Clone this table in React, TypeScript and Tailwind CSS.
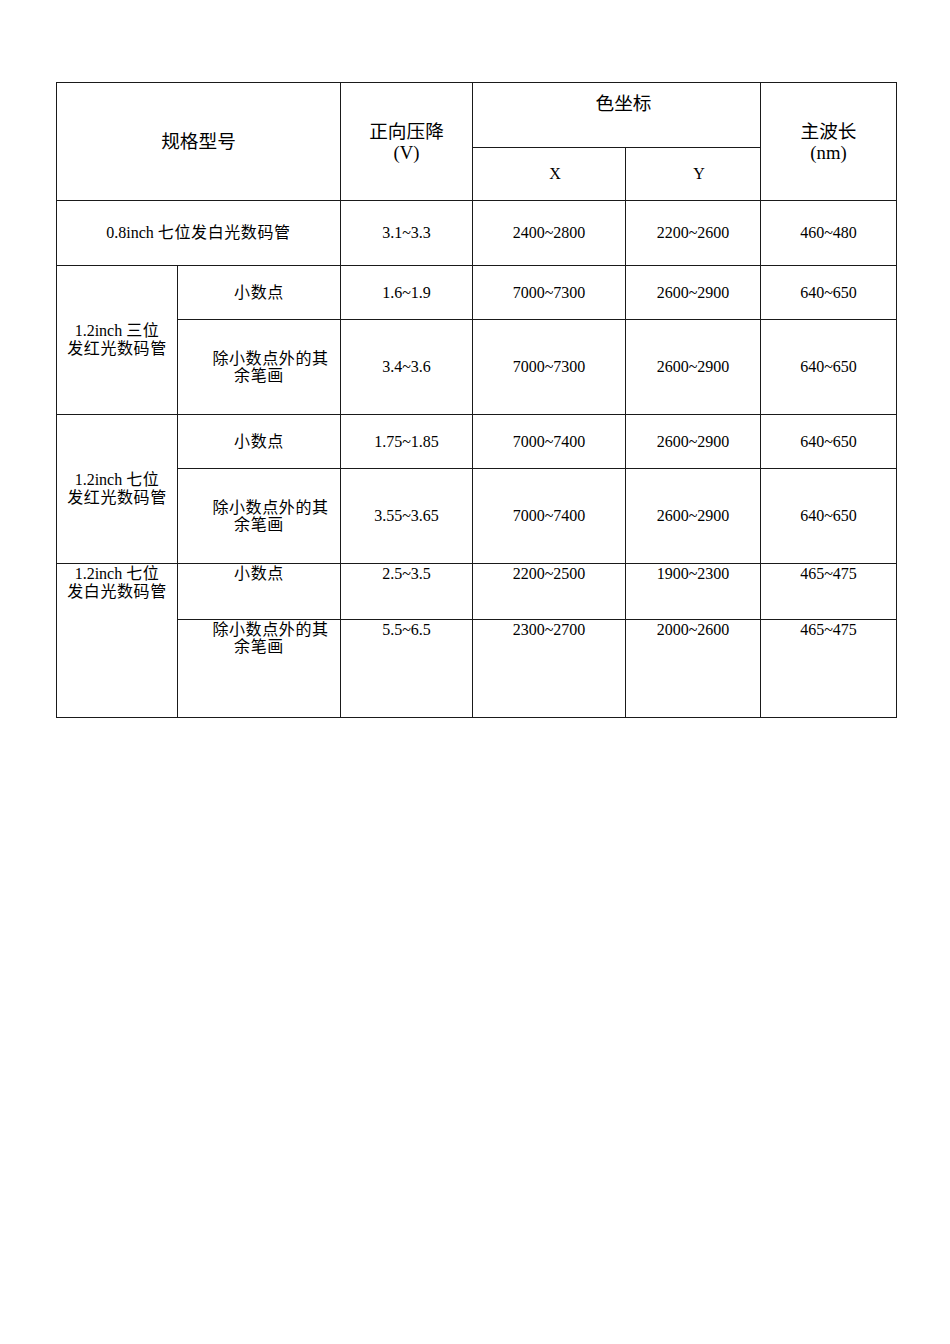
import React from "react";

const C = ({ children }: { children: React.ReactNode }) => (
  <span className="tracking-[0.6px]">{children}</span>
);

const Cell = ({
  className = "",
  children,
}: {
  className?: string;
  children?: React.ReactNode;
}) => (
  <div className={`bg-white flex flex-col items-center text-center ${className}`}>
    {children}
  </div>
);

const Mid = () => (
  <div className="w-full leading-[17px]">
    <div className="pl-[23px]">
      <C>除小数点外的其</C>
    </div>
    <div>
      <C>余笔画</C>
    </div>
  </div>
);

export default function App() {
  const c = "justify-center leading-[18px]";
  const t = "justify-start pt-[1px] leading-[18px]";
  return (
    <div className="min-h-[1344px] w-[950px] bg-white text-black font-['Liberation_Serif','Noto_Sans_CJK_SC',serif] text-[16px]">
      <div className="pt-[82px] pl-[56px]">
        <div className="grid w-[841px] grid-cols-[120px_162px_131px_152px_134px_135px] grid-rows-[64px_52px_64px_53px_94px_53px_94px_55px_97px] gap-px bg-[#1a1a1a] p-px">
          {/* header */}
          <Cell className="col-start-1 col-span-2 row-start-1 row-span-2 justify-center text-[18.67px] leading-[21px]">
            规格型号
          </Cell>
          <Cell className="col-start-3 row-start-1 row-span-2 justify-center text-[18.67px] leading-[21px]">
            <div>正向压降</div>
            <div>(V)</div>
          </Cell>
          <Cell className="col-start-4 col-span-2 row-start-1 justify-start pt-[10px] pl-[14px] text-[18.67px] leading-[21px]">
            色坐标
          </Cell>
          <Cell className="col-start-6 row-start-1 row-span-2 justify-center text-[18.67px] leading-[21px]">
            <div>主波长</div>
            <div>(nm)</div>
          </Cell>
          <Cell className="col-start-4 row-start-2 justify-center pl-[12px] text-[16px]">X</Cell>
          <Cell className="col-start-5 row-start-2 justify-center pl-[12px] text-[16px]">Y</Cell>

          {/* row 3 */}
          <Cell className={`col-start-1 col-span-2 row-start-3 ${c}`}>
            <div>
              0.8inch <C>七位发白光数码管</C>
            </div>
          </Cell>
          <Cell className={`col-start-3 row-start-3 ${c}`}>3.1~3.3</Cell>
          <Cell className={`col-start-4 row-start-3 ${c}`}>2400~2800</Cell>
          <Cell className={`col-start-5 row-start-3 ${c}`}>2200~2600</Cell>
          <Cell className={`col-start-6 row-start-3 ${c}`}>460~480</Cell>

          {/* group 2 */}
          <Cell className={`col-start-1 row-start-4 row-span-2 ${c}`}>
            <div>
              1.2inch <C>三位</C>
            </div>
            <div>
              <C>发红光数码管</C>
            </div>
          </Cell>
          <Cell className={`col-start-2 row-start-4 ${c}`}>
            <C>小数点</C>
          </Cell>
          <Cell className={`col-start-3 row-start-4 ${c}`}>1.6~1.9</Cell>
          <Cell className={`col-start-4 row-start-4 ${c}`}>7000~7300</Cell>
          <Cell className={`col-start-5 row-start-4 ${c}`}>2600~2900</Cell>
          <Cell className={`col-start-6 row-start-4 ${c}`}>640~650</Cell>
          <Cell className={`col-start-2 row-start-5 ${c}`}>
            <Mid />
          </Cell>
          <Cell className={`col-start-3 row-start-5 ${c}`}>3.4~3.6</Cell>
          <Cell className={`col-start-4 row-start-5 ${c}`}>7000~7300</Cell>
          <Cell className={`col-start-5 row-start-5 ${c}`}>2600~2900</Cell>
          <Cell className={`col-start-6 row-start-5 ${c}`}>640~650</Cell>

          {/* group 3 */}
          <Cell className={`col-start-1 row-start-6 row-span-2 ${c}`}>
            <div>
              1.2inch <C>七位</C>
            </div>
            <div>
              <C>发红光数码管</C>
            </div>
          </Cell>
          <Cell className={`col-start-2 row-start-6 ${c}`}>
            <C>小数点</C>
          </Cell>
          <Cell className={`col-start-3 row-start-6 ${c}`}>1.75~1.85</Cell>
          <Cell className={`col-start-4 row-start-6 ${c}`}>7000~7400</Cell>
          <Cell className={`col-start-5 row-start-6 ${c}`}>2600~2900</Cell>
          <Cell className={`col-start-6 row-start-6 ${c}`}>640~650</Cell>
          <Cell className={`col-start-2 row-start-7 ${c}`}>
            <Mid />
          </Cell>
          <Cell className={`col-start-3 row-start-7 ${c}`}>3.55~3.65</Cell>
          <Cell className={`col-start-4 row-start-7 ${c}`}>7000~7400</Cell>
          <Cell className={`col-start-5 row-start-7 ${c}`}>2600~2900</Cell>
          <Cell className={`col-start-6 row-start-7 ${c}`}>640~650</Cell>

          {/* group 4 */}
          <Cell className={`col-start-1 row-start-8 row-span-2 ${t}`}>
            <div>
              1.2inch <C>七位</C>
            </div>
            <div>
              <C>发白光数码管</C>
            </div>
          </Cell>
          <Cell className={`col-start-2 row-start-8 ${t}`}>
            <C>小数点</C>
          </Cell>
          <Cell className={`col-start-3 row-start-8 ${t}`}>2.5~3.5</Cell>
          <Cell className={`col-start-4 row-start-8 ${t}`}>2200~2500</Cell>
          <Cell className={`col-start-5 row-start-8 ${t}`}>1900~2300</Cell>
          <Cell className={`col-start-6 row-start-8 ${t}`}>465~475</Cell>
          <Cell className={`col-start-2 row-start-9 ${t}`}>
            <Mid />
          </Cell>
          <Cell className={`col-start-3 row-start-9 ${t}`}>5.5~6.5</Cell>
          <Cell className={`col-start-4 row-start-9 ${t}`}>2300~2700</Cell>
          <Cell className={`col-start-5 row-start-9 ${t}`}>2000~2600</Cell>
          <Cell className={`col-start-6 row-start-9 ${t}`}>465~475</Cell>
        </div>
      </div>
    </div>
  );
}
